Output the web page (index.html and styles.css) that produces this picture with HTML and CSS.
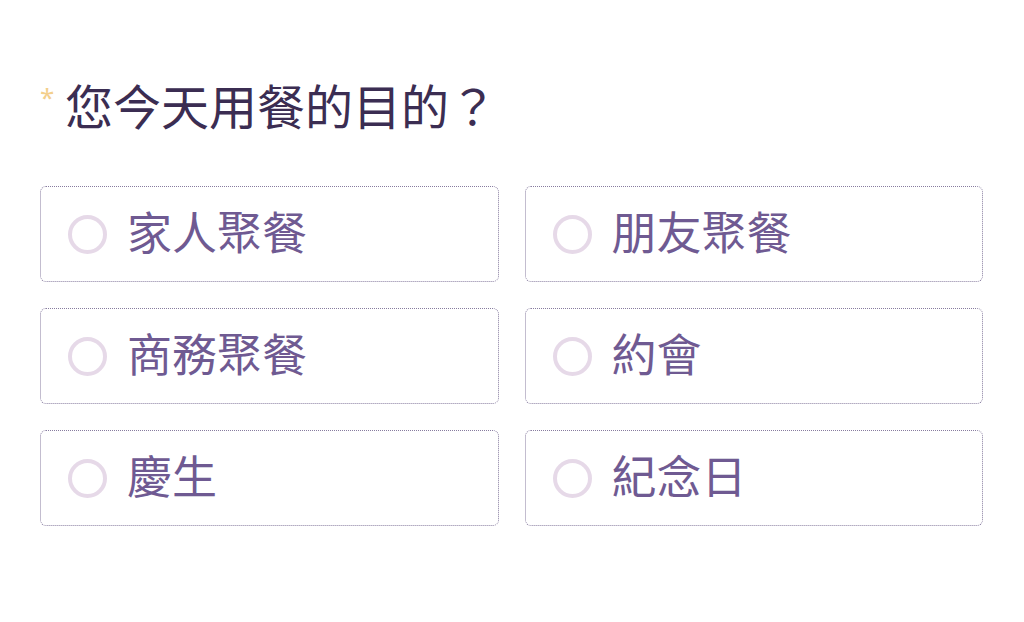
FILE: index.html
```html
<!DOCTYPE html>
<html lang="zh-Hant">
<head>
<meta charset="utf-8">
<title>用餐目的</title>
<link rel="stylesheet" href="styles.css">
</head>
<body>
<main class="page">
  <h1 class="question"><span class="required">*</span><span class="question-text">您今天用餐的目的？</span></h1>
  <div class="options">
    <label class="option"><span class="radio"></span><span class="label">家人聚餐</span></label>
    <label class="option"><span class="radio"></span><span class="label">朋友聚餐</span></label>
    <label class="option"><span class="radio"></span><span class="label">商務聚餐</span></label>
    <label class="option"><span class="radio"></span><span class="label">約會</span></label>
    <label class="option"><span class="radio"></span><span class="label">慶生</span></label>
    <label class="option"><span class="radio"></span><span class="label">紀念日</span></label>
  </div>
</main>
</body>
</html>
```
FILE: styles.css
```css
html, body {
  margin: 0;
  padding: 0;
  background: #ffffff;
}
body {
  font-family: "Noto Sans CJK TC", "Noto Sans", sans-serif;
}
.page {
  padding: 66px 41px 0 40px;
}
.question {
  margin: 0;
  display: flex;
  align-items: flex-start;
  font-weight: 400;
  font-size: 48px;
  line-height: 76px;
  color: #3b2d52;
}
.required {
  font-size: 26px;
  line-height: 26px;
  margin-top: 18px;
  width: 25px;
  color: #f3cf8c;
  font-family: "Noto Sans", sans-serif;
}
.options {
  margin-top: 44px;
  display: grid;
  grid-template-columns: 1fr 1fr;
  column-gap: 26px;
  row-gap: 26px;
}
.option {
  height: 96px;
  box-sizing: border-box;
  border: 1px dotted #877c9f;
  border-radius: 6px;
  display: flex;
  align-items: center;
  padding-left: 27px;
  gap: 20px;
  cursor: pointer;
}
.radio {
  width: 39px;
  height: 39px;
  box-sizing: border-box;
  border: 4px solid #e6d9e8;
  border-radius: 50%;
  flex: none;
}
.label {
  font-size: 45px;
  line-height: 60px;
  margin-bottom: 6px;
  color: #6f5a92;
}
```
